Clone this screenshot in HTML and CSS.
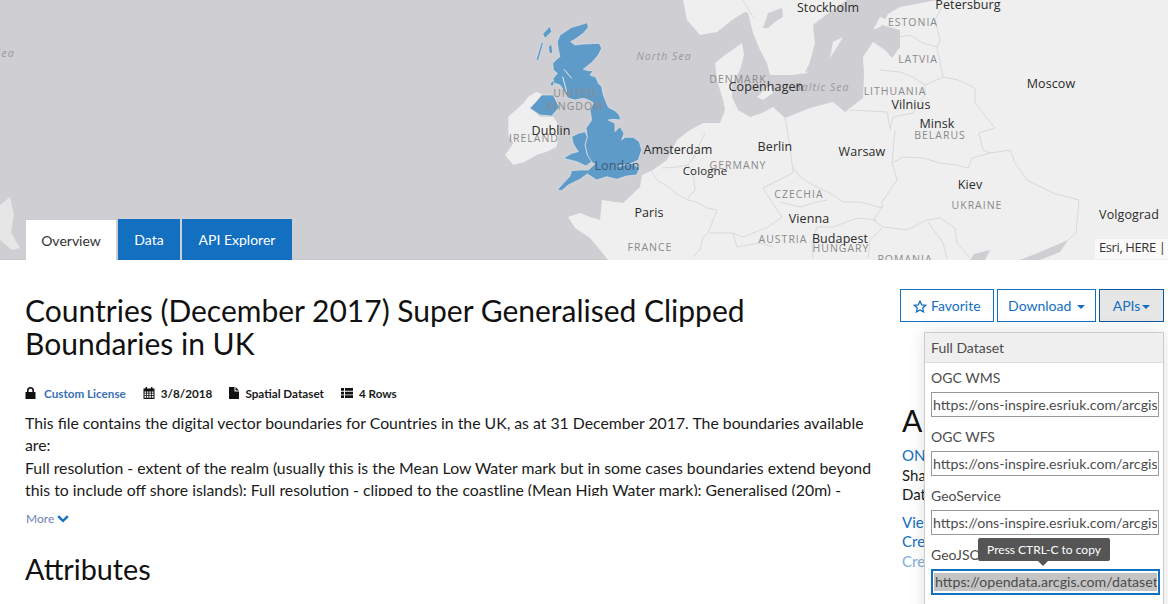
FILE: index.html
```html
<!DOCTYPE html>
<html lang="en">
<head>
    <meta charset="UTF-8">
    <title>Countries (December 2017) Super Generalised Clipped Boundaries in UK</title>
    <link rel="stylesheet" href="styles.css">
</head>
<body>
    <div class="hero">
        <svg class="map" width="1168" height="260" viewBox="0 0 1168 260">
            <!-- mainland -->
            <path class="land" d="M568,217 L580,213 L590,217 L600,220 L602,200 L623,203 L640,187 L642,175 L653,170 L667,160 L677,140 L690,130 L703,123 L720,123 L725,110 L723,100 L717,80 L715,63 L725,55 L735,48 L742,43 L744,55 L740,70 L732,85 L732,97 L738,110 L750,117 L762,113 L773,107 L785,118 L810,108 L833,102 L845,112 L863,98 L864,75 L863,57 L873,42 L885,50 L892,58 L900,47 L900,30 L882,25 L888,14 L900,7 L937,0 L1168,0 L1168,260 L608,260 L600,250 L590,238 L575,228 Z"/>
            <!-- Scandinavia -->
            <path class="land" d="M683,0 L687,20 L700,35 L717,32 L732,20 L745,12 L748,13 L753,33 L760,50 L767,63 L770,75 L792,75 L807,73 L815,43 L813,25 L822,18 L833,10 L847,0 Z"/>
            <path class="water" d="M763,28 L768,13 L782,8 L783,17 L775,22 L768,28 Z"/>
            <path class="channel" d="M806,72 L817,50"/>
            <!-- Baltic islands -->
            <path class="land" d="M830,58 L833,42 L843,37 L837,47 Z"/>
            <path class="land" d="M873,30 L880,17 L888,20 L880,27 Z"/>
            <path class="land" d="M757,97 L770,85 L773,93 L763,100 Z"/>
            <path class="land faint" d="M0,205 L10,197 L14,215 L11,232 L20,248 L12,250 L0,240 Z"/>
            <!-- Black Sea and Azov -->
            <path class="water" d="M970,260 L974,254 L990,250 L985,260 Z"/>
            <path class="water" d="M1020,260 L1040,252 L1068,240 L1060,252 L1040,260 Z"/>
            <!-- borders -->
            <path class="border" d="M652,172 L657,180 L670,188 L678,195 L688,200 L697,202 L707,208 L717,210 L712,223 L708,233 L703,237 L700,250 L693,257"/>
            <path class="border" d="M705,133 L692,160 L688,165 L693,172 L695,190 L688,198"/>
            <path class="border" d="M662,168 L677,167 L688,165"/>
            <path class="border" d="M785,117 L790,147 L793,173 L763,188 L777,210 L782,217"/>
            <path class="border" d="M710,233 L733,233 L743,237 L768,227 L782,217"/>
            <path class="border" d="M733,233 L737,247 L760,243 L773,247"/>
            <path class="border" d="M895,130 L892,163 L897,180 L882,202 L882,208 L860,202 L843,202 L830,193 L813,185 L800,177 L793,167"/>
            <path class="border" d="M780,202 L800,207 L817,202 L827,200"/>
            <path class="border" d="M877,220 L857,218 L833,227 L817,227 L812,243 L813,258"/>
            <path class="border" d="M882,208 L873,220 L883,227 L907,230 L927,220 L940,218 L955,228 L957,243 L970,258"/>
            <path class="border" d="M883,227 L870,240 L868,258"/>
            <path class="border" d="M928,222 L943,243 L947,258"/>
            <path class="border" d="M892,163 L903,157 L923,158 L940,163 L957,165 L968,168 L972,158 L990,153 L1010,150 L1015,163 L1020,170 L1027,180 L1053,193 L1079,200 L1076,233 L1068,240"/>
            <path class="border" d="M943,77 L958,80 L975,88 L975,103 L995,128 L979,133 L983,150 L990,153"/>
            <path class="border" d="M943,77 L937,48 L940,40 L935,20 L942,7"/>
            <path class="border" d="M900,37 L910,35 L923,43 L937,47"/>
            <path class="border" d="M880,70 L900,72 L913,77 L925,85 L943,77"/>
            <path class="border" d="M925,85 L925,95 L913,113 L893,117 L890,130"/>
            <path class="border" d="M850,110 L887,112 L890,128"/>
            <path class="border" d="M743,0 L753,17"/>
            <!-- Ireland and Britain, coordinates are 3x from 500,20 -->
            <g transform="translate(500,20) scale(0.3333)">
                <path class="land" d="M70,250 L85,230 L110,215 L130,225 L90,262 L120,290 L160,290 L172,310 L175,345 L170,380 L140,395 L110,405 L75,425 L40,435 L15,405 L40,370 L25,345 L25,290 Z"/>
                <path class="uk" d="M90,265 L108,245 L125,225 L160,225 L178,262 L155,288 L120,285 Z"/>
                <path class="uk" d="M195,35 L215,22 L240,15 L262,8 L265,22 L250,40 L225,58 L212,65 L225,75 L250,72 L298,70 L305,85 L295,105 L275,128 L250,148 L265,152 L280,152 L270,165 L288,172 L295,190 L305,200 L310,225 L318,245 L325,262 L345,272 L358,285 L362,300 L340,298 L325,300 L345,310 L345,335 L360,320 L372,340 L365,360 L375,352 L400,352 L418,365 L425,390 L415,420 L395,430 L418,445 L410,465 L380,468 L350,478 L320,470 L290,480 L262,462 L240,478 L205,495 L185,512 L172,510 L190,490 L210,468 L215,452 L240,450 L265,450 L285,432 L272,425 L262,405 L255,375 L262,350 L258,325 L275,300 L270,270 L280,248 L265,240 L250,235 L225,240 L205,235 L195,215 L180,195 L165,190 L155,195 L160,175 L172,160 L160,150 L158,130 L170,118 L180,110 L175,90 L172,65 L180,45 Z"/>
                <path class="uk" d="M190,415 L215,400 L235,395 L220,372 L215,350 L235,340 L255,335 L262,350 L255,375 L262,405 L275,425 L258,438 L230,425 L210,420 Z"/>
                <path class="uk" d="M128,42 L150,18 L155,35 L135,55 Z"/>
                <path class="uk" d="M145,80 L155,72 L158,100 L148,100 Z"/>
                <path class="uk" d="M108,120 L125,65 L130,70 L115,122 Z"/>
                <path class="uk" d="M150,192 L160,180 L162,195 L155,198 Z"/>
                <path class="inlet" d="M200,215 L188,170 M215,175 L192,148 M350,440 L395,430"/>
            </g>
            <text class="sea" x="5" y="57">Sea</text>
            <text class="sea" x="664" y="60">North Sea</text>
            <text class="sea" x="822" y="91">Baltic Sea</text>
            <text class="country" x="575" y="97">UNITED</text>
            <text class="country" x="575" y="110">KINGDOM</text>
            <text class="country" x="534" y="142">IRELAND</text>
            <text class="country" x="913" y="26">ESTONIA</text>
            <text class="country" x="918" y="63">LATVIA</text>
            <text class="country" x="738" y="83">DENMARK</text>
            <text class="country" x="895" y="95">LITHUANIA</text>
            <text class="country" x="940" y="139">BELARUS</text>
            <text class="country" x="738" y="169">GERMANY</text>
            <text class="country" x="799" y="198">CZECHIA</text>
            <text class="country" x="977" y="209">UKRAINE</text>
            <text class="country" x="783" y="243">AUSTRIA</text>
            <text class="country" x="841" y="252">HUNGARY</text>
            <text class="country" x="650" y="251">FRANCE</text>
            <text class="country" x="905" y="263">ROMANIA</text>
            <text class="city" x="828" y="12">Stockholm</text>
            <text class="city" x="968" y="9">Petersburg</text>
            <text class="city" x="766" y="91">Copenhagen</text>
            <text class="city" x="1051" y="88">Moscow</text>
            <text class="city" x="911" y="109">Vilnius</text>
            <text class="city" x="937" y="128">Minsk</text>
            <text class="city" x="551" y="135">Dublin</text>
            <text class="city" x="678" y="154">Amsterdam</text>
            <text class="city" x="775" y="151">Berlin</text>
            <text class="city" x="862" y="156">Warsaw</text>
            <text class="city capital" x="617" y="170">London</text>
            <text class="city small" x="705" y="175">Cologne</text>
            <text class="city" x="970" y="189">Kiev</text>
            <text class="city" x="649" y="217">Paris</text>
            <text class="city" x="809" y="223">Vienna</text>
            <text class="city" x="1129" y="219">Volgograd</text>
            <text class="city" x="840" y="243">Budapest</text>
        </svg>
        <div class="attribution">Esri, HERE |</div>
        <nav class="tabs">
            <a class="tab tab-active">Overview</a>
            <a class="tab tab-data">Data</a>
            <a class="tab tab-api">API Explorer</a>
        </nav>
    </div>

    <div class="content">
        <div class="main-col">
            <h1>Countries (December 2017) Super Generalised Clipped Boundaries in UK</h1>
            <ul class="meta">
                <li>
                    <svg class="icon" width="11" height="12" viewBox="0 0 11 12"><path d="M2,5 V3.5 A3.5,3.5 0 0 1 9,3.5 V5 H10.5 V12 H0.5 V5 Z M3.6,5 H7.4 V3.5 A1.9,1.9 0 0 0 3.6,3.5 Z" fill-rule="evenodd"/></svg>
                    <a class="license">Custom License</a>
                </li>
                <li>
                    <svg class="icon" width="12" height="12" viewBox="0 0 12 12"><path d="M0.5,1.5 H2.5 V0 H4 V1.5 H8 V0 H9.5 V1.5 H11.5 V12 H0.5 Z M1.5,4.5 V5.8 H3 V4.5 Z M3.8,4.5 V5.8 H5.4 V4.5 Z M6.3,4.5 V5.8 H7.9 V4.5 Z M8.8,4.5 V5.8 H10.5 V4.5 Z M1.5,6.6 V8 H3 V6.6 Z M3.8,6.6 V8 H5.4 V6.6 Z M6.3,6.6 V8 H7.9 V6.6 Z M8.8,6.6 V8 H10.5 V6.6 Z M1.5,8.8 V10.8 H3 V8.8 Z M3.8,8.8 V10.8 H5.4 V8.8 Z M6.3,8.8 V10.8 H7.9 V8.8 Z M8.8,8.8 V10.8 H10.5 V8.8 Z" fill-rule="evenodd"/></svg>
                    3/8/2018
                </li>
                <li>
                    <svg class="icon" width="10" height="12" viewBox="0 0 10 12"><path d="M0,0 H5.5 V4.5 H10 V12 H0 Z M6.5,0 L10,3.5 H6.5 Z"/></svg>
                    Spatial Dataset
                </li>
                <li>
                    <svg class="icon" width="12" height="12" viewBox="0 0 12 12"><path d="M0,1 H3 V3.8 H0 Z M4,1 H12 V3.8 H4 Z M0,4.7 H3 V7.4 H0 Z M4,4.7 H12 V7.4 H4 Z M0,8.3 H3 V11 H0 Z M4,8.3 H12 V11 H4 Z"/></svg>
                    4 Rows
                </li>
            </ul>
            <p class="description">This file contains the digital vector boundaries for Countries in the UK, as at 31 December 2017. The boundaries available are:<br>Full resolution - extent of the realm (usually this is the Mean Low Water mark but in some cases boundaries extend beyond this to include off shore islands): Full resolution - clipped to the coastline (Mean High Water mark): Generalised (20m) - clipped to the coastline (Mean High Water mark).</p>
            <a class="more">More
                <svg class="chevron" width="12" height="8" viewBox="0 0 12 8"><path d="M0.3,2 L2,0.3 L6,4.2 L10,0.3 L11.7,2 L6,7.6 Z"/></svg>
            </a>
            <h2>Attributes</h2>
        </div>

        <div class="side-col">
            <div class="actions">
                <button class="btn btn-favorite">
                    <svg class="star" width="14" height="13" viewBox="0 0 14 13"><path d="M7,1.2 L8.7,4.8 L12.6,5.3 L9.7,8 L10.5,11.9 L7,10 L3.5,11.9 L4.3,8 L1.4,5.3 L5.3,4.8 Z"/></svg>
                    Favorite
                </button>
                <button class="btn btn-download">Download <span class="caret"></span></button>
                <button class="btn btn-open">APIs<span class="caret"></span></button>
                <div class="dropdown">
                    <div class="dropdown-head">Full Dataset</div>
                    <div class="dropdown-body">
                        <label class="api-label">OGC WMS</label>
                        <input class="api-input" value="https://ons-inspire.esriuk.com/arcgis/rest/services/Administrative_Boundaries">
                        <label class="api-label">OGC WFS</label>
                        <input class="api-input" value="https://ons-inspire.esriuk.com/arcgis/rest/services/Administrative_Boundaries">
                        <label class="api-label">GeoService</label>
                        <input class="api-input" value="https://ons-inspire.esriuk.com/arcgis/rest/services/Administrative_Boundaries">
                        <label class="api-label">GeoJSON</label>
                        <div class="api-input api-selected"><span>https://opendata.arcgis.com/datasets/f2c2c7a8</span></div>
                    </div>
                    <div class="copy-tip">Press CTRL-C to copy</div>
                </div>
            </div>
            <h2 class="about">About</h2>
            <p class="about-line"><a>ONS</a><br>Shared<br>Data</p>
            <p class="about-line"><a>View</a><br><a>Create</a><br><a class="faded">Create</a></p>
        </div>
    </div>
</body>
</html>
```

FILE: styles.css
```css
* {
    box-sizing: border-box;
}

html, body {
    height: 604px;
    overflow: hidden;
}

body {
    margin: 0;
    font-family: "Lato", "Open Sans", sans-serif;
    font-size: 16px;
    color: #1a1a1a;
    background: #fff;
}

/* Map banner */
.hero {
    position: relative;
    height: 260px;
    background: #cfced3;
    border-bottom: 1px solid #c8c8c8;
}

.map {
    position: absolute;
    top: 0;
    left: 0;
    display: block;
}

.land { fill: #efefef; }
.land.faint { fill: #e6e6e7; }
.water { fill: #cfced3; }
.channel { fill: none; stroke: #cfced3; stroke-width: 1.5; }
.uk { fill: #5f9bc8; stroke: #e3e6e9; stroke-width: 2; }
.inlet { fill: none; stroke: #e3e6e9; stroke-width: 3; }
.border { fill: none; stroke: #d9d9d9; stroke-width: 1; }

.map text {
    font-family: "Open Sans", sans-serif;
    text-anchor: middle;
}

.city { font-size: 12.5px; letter-spacing: 0.1px; fill: #2b2b2b; }
.city.small { font-size: 11.5px; }
.city.capital { fill: #3d5a75; }
.country { font-size: 10.5px; letter-spacing: 1px; fill: #8a8a8a; }
.sea { font-size: 10.5px; font-style: italic; letter-spacing: 1px; fill: #9a9a9e; }

.attribution {
    position: absolute;
    right: 0;
    bottom: 0;
    width: 73px;
    height: 20px;
    padding: 0 0 0 4px;
    font-family: "Open Sans", sans-serif;
    font-size: 13px;
    letter-spacing: -0.4px;
    line-height: 17px;
    white-space: nowrap;
    color: #333;
    background: rgba(255, 255, 255, 0.7);
}

.tabs {
    position: absolute;
    left: 26px;
    bottom: -1px;
    display: flex;
    align-items: flex-end;
}

.tab {
    height: 41px;
    line-height: 41px;
    text-align: center;
    font-size: 14px;
    color: #fff;
    background: #136fbf;
}

.tab-active {
    width: 90px;
    height: 40px;
    margin-right: 2px;
    color: #333;
    background: #fff;
}

.tab-data {
    width: 62px;
    margin-right: 2px;
}

.tab-api {
    width: 110px;
}

/* Page body */
.content {
    display: flex;
    gap: 20px;
    padding: 0 4px 0 25px;
}

.main-col {
    width: 855px;
    padding-top: 34px;
}

h1 {
    margin: 0;
    font-size: 30px;
    font-weight: 400;
    line-height: 33px;
    color: #111;
}

h2 {
    margin: 0;
    font-size: 28.8px;
    font-weight: 400;
    line-height: 36px;
    color: #111;
}

.meta {
    display: flex;
    gap: 17px;
    margin: 24px 0 0;
    padding: 0;
    list-style: none;
    font-size: 11.7px;
    font-weight: 700;
    line-height: 18px;
}

.meta li {
    display: flex;
    align-items: center;
    gap: 6px;
}

.meta li:first-child {
    gap: 8px;
}

.icon {
    fill: #111;
}

.license {
    color: #3a6fb5;
}

.description {
    margin: 10px 0 0;
    height: 84px;
    overflow: hidden;
    font-size: 15.8px;
    line-height: 22.4px;
}

.more {
    display: block;
    margin: 15px 0 0 1px;
    font-size: 12px;
    line-height: 16px;
    color: #6f7fb5;
}

.chevron {
    fill: #136fbf;
}

.main-col h2 {
    margin-top: 24px;
}

/* Right column */
.side-col {
    position: relative;
    flex: 1;
    padding-top: 29px;
}

.actions {
    position: relative;
    display: flex;
    gap: 3px;
}

.btn {
    height: 33px;
    padding: 0 9px;
    font-family: inherit;
    font-size: 14px;
    color: #136fbf;
    background: #fff;
    border: 1px solid #136fbf;
    white-space: nowrap;
}

.btn-favorite {
    width: 94px;
}

.btn-download {
    width: 99px;
}

.btn-open {
    width: 65px;
    background: #e6e6e6;
    border-color: #0f5a9c;
}

.star {
    fill: none;
    stroke: #136fbf;
    stroke-width: 1.3;
    vertical-align: -2px;
}

.caret {
    display: inline-block;
    margin-left: 2px;
    border-top: 4px solid #136fbf;
    border-left: 4px solid transparent;
    border-right: 4px solid transparent;
    vertical-align: 2px;
}

.dropdown {
    position: absolute;
    top: 43px;
    left: 24px;
    z-index: 2;
    width: 240px;
    height: 290px;
    background: #fff;
    border: 1px solid #ccc;
    box-shadow: 0 0 16px rgba(0, 0, 0, 0.12);
}

.dropdown-head {
    height: 30px;
    padding: 0 6px;
    line-height: 30px;
    font-size: 14px;
    color: #4c4c4c;
    background: #efefef;
    border-bottom: 1px solid #ddd;
}

.dropdown-body {
    padding: 5px 6px;
}

.api-label {
    display: block;
    height: 24px;
    line-height: 20px;
    font-size: 14px;
    color: #4c4c4c;
}

.api-input {
    display: block;
    width: 228px;
    height: 25px;
    margin: 0 0 10px;
    padding: 0 1px;
    font-family: inherit;
    font-size: 14.2px;
    line-height: 23px;
    color: #4c4c4c;
    background: #fff;
    border: 1px solid #999;
    border-radius: 0;
    overflow: hidden;
    white-space: nowrap;
}

.api-selected {
    height: 26px;
    width: 229px;
    padding: 2px 1px;
    line-height: 20px;
    border: 2px solid #136fbf;
}

.api-selected span {
    display: block;
    height: 18px;
    padding-left: 1px;
    line-height: 18px;
    overflow: hidden;
    background: #c4c4c4;
}

.copy-tip {
    position: absolute;
    top: 205px;
    left: 53px;
    width: 132px;
    height: 23px;
    line-height: 23px;
    text-align: center;
    font-size: 12px;
    color: #fff;
    background: #555;
    border-radius: 2px;
}

.copy-tip::after {
    content: "";
    position: absolute;
    bottom: -5px;
    left: 60px;
    border-top: 5px solid #555;
    border-left: 5px solid transparent;
    border-right: 5px solid transparent;
}

.about {
    margin-top: 80px;
    margin-left: 2px;
    font-size: 30px;
}

.about-line {
    margin: 8px 0 0 2px;
    font-size: 15px;
    line-height: 19.5px;
}

.about-line a {
    color: #136fbf;
}

.about-line a.faded {
    color: #7fb0dc;
}
```
